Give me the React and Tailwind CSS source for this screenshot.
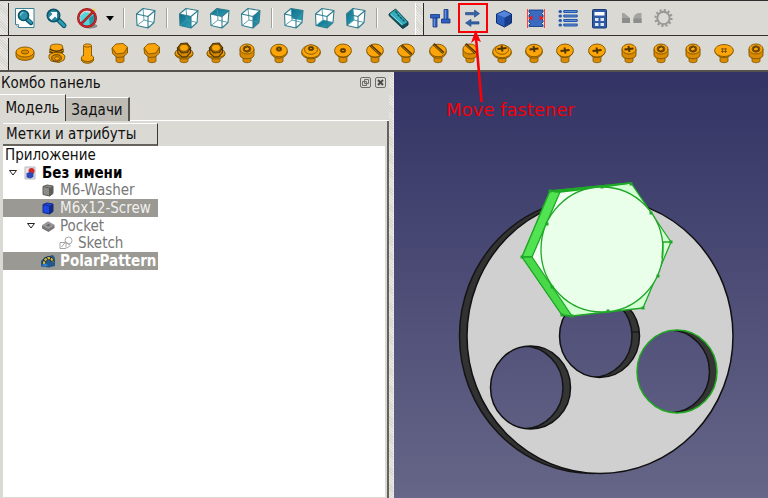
import clsx from 'clsx'

/* ---------- view cube ---------- */

const cubeFaces = {
  front: '2.5,8 14,10.5 14,22 3,19.5',
  top: '2.5,8 9,2.5 21,4.5 14,10.5',
  right: '14,10.5 21,4.5 20,16.5 14,22',
  rear: '9,2.5 21,4.5 20,14.5 10,12.5',
  bottom: '3,19.5 10,14 20,16.5 14,22',
  left: '2.5,8 9,2.5 10,14 3,19.5',
}

function Cube({ face }) {
  return (
    <svg width="24" height="24" viewBox="0 0 24 24" aria-hidden>
      <defs>
        <linearGradient id="cubeFace" x1="0" y1="0" x2="1" y2="1">
          <stop offset="0" stopColor="#0a6c88" />
          <stop offset="1" stopColor="#2fa3bb" />
        </linearGradient>
      </defs>
      <polygon points="2.5,8 9,2.5 21,4.5 20,16.5 14,22 3,19.5" fill="#fff" />
      {face && <polygon points={cubeFaces[face]} fill="url(#cubeFace)" />}
      <path d="M9 2.5 10 14 3 19.5M10 14l10 2.5" stroke="#4b98a8" strokeWidth="0.9" fill="none" />
      <path
        d="M2.5 8 9 2.5l12 2-1 12-6 5.5L3 19.5zM2.5 8 14 10.5 21 4.5M14 10.5V22"
        stroke="#2f7d8e"
        strokeWidth="1.1"
        strokeLinejoin="round"
        fill="none"
      />
    </svg>
  )
}

/* ---------- top toolbar icons ---------- */

function FitAll() {
  return (
    <svg width="24" height="24" viewBox="0 0 24 24" aria-hidden>
      <path d="M2.5 2.5H21v19H5.5l-3-3z" fill="#fff" stroke="#3a7f90" strokeWidth="1" />
      <path d="M2.5 18.500h3v3" fill="#cfe0e4" stroke="#3a7f90" strokeWidth="0.8" />
      <path d="m14 13.500 4 3.500" stroke="#0b5468" strokeWidth="4.400" strokeLinecap="round" />
      <path d="m14.500 13.500 3.500 3.200" stroke="#2a9cb5" strokeWidth="2.400" strokeLinecap="round" />
      <circle cx="10.500" cy="9.500" r="5" fill="#2d93ab" stroke="#0b5468" strokeWidth="1.600" />
      <path d="M7.500 9.500a3 3 0 0 1 3-3" stroke="#8fd0dd" strokeWidth="1.200" fill="none" />
    </svg>
  )
}

function FitSelection() {
  return (
    <svg width="24" height="24" viewBox="0 0 24 24" aria-hidden>
      <path d="m15 14.500 5 5" stroke="#0b5468" strokeWidth="5" strokeLinecap="round" />
      <path d="m15.500 15 4.500 4.500" stroke="#2a9cb5" strokeWidth="3" strokeLinecap="round" />
      <circle cx="9.500" cy="9.500" r="6.200" fill="#2587a0" stroke="#0b5468" strokeWidth="1.600" />
      <path d="M13 6v6.500l-2-2-3.500 3.500-2.500-2.500L8.500 8l-2-2z" fill="#fff" />
    </svg>
  )
}

function DrawStyle() {
  return (
    <svg width="24" height="24" viewBox="0 0 24 24" aria-hidden>
      <ellipse cx="15" cy="20" rx="7.500" ry="2.500" fill="#8d8b86" />
      <path d="m5 10 5-4 10 2v9l-5 4-9-3z" fill="#55d3da" />
      <path d="m14 12 6-4v9l-5 4z" fill="#2798a5" />
      <path d="m13 11 7-8" stroke="#f2d648" strokeWidth="2.600" />
      <circle cx="12" cy="12" r="8.800" fill="none" stroke="#8e1218" strokeWidth="2.400" />
      <path d="M18.300 5.700 5.700 18.300" stroke="#8e1218" strokeWidth="2.400" />
      <circle cx="12" cy="12" r="8.800" fill="none" stroke="#c8282e" strokeWidth="1.400" />
      <path d="M18.300 5.700 5.700 18.300" stroke="#c8282e" strokeWidth="1.400" />
    </svg>
  )
}

function Measure() {
  return (
    <svg width="24" height="24" viewBox="0 0 24 24" aria-hidden>
      <path d="M2 8 8.500 3 21 16v3l-5 3.500-1-.5L2 9.500z" fill="#174a55" stroke="#103f49" strokeWidth="1" strokeLinejoin="round" />
      <path d="M2.500 8 8.500 3.500 20.500 16 15 19.500z" fill="#35aebb" />
      <path d="m8 5 2.500 2.500m0 1 2 2m.5.500 2 2m.5.500 2 2" stroke="#0d5563" strokeWidth="1.400" />
      <path d="m4 8.500 11 10" stroke="#8ee0e6" strokeWidth="0.9" />
    </svg>
  )
}

function Bolts() {
  return (
    <svg width="24" height="24" viewBox="0 0 24 24" aria-hidden>
      <g fill="#2f5fc4" stroke="#16357c" strokeWidth="0.8">
        <path d="M5 11h4v10H5z" />
        <path d="M2.500 8.500h9V12h-9z" />
        <path d="M16 3.500h4V14h-4z" />
        <path d="M13.500 13h8.500v4h-8.500z" />
      </g>
      <path d="M6.300 12.500v8M17.300 4v9" stroke="#7fa5ea" strokeWidth="0.9" />
    </svg>
  )
}

function MoveFastener() {
  return (
    <svg width="24" height="24" viewBox="0 0 24 24" aria-hidden>
      <g fill="#3465a4" stroke="#1d3f86" strokeWidth="0.6">
        <path d="M5.500 6.500h9V4l5 3.600-5 3.600V8.800h-9z" />
        <path d="M19 15.800h-8v-2.500l-5.500 3.600 5.500 3.600v-2.400h8z" />
      </g>
    </svg>
  )
}

function BlueBox() {
  return (
    <svg width="24" height="24" viewBox="0 0 24 24" aria-hidden>
      <path d="m4.500 8 8-3.500L19.500 8v9l-7 4-8-4z" fill="#2c5cbc" stroke="#102f70" strokeWidth="1" strokeLinejoin="round" />
      <path d="m5 8.200 7.500-3.200 6.500 3.200-6.500 3.300z" fill="#5585da" />
      <path d="M12.500 12 19 8.500V17l-6.500 3.500z" fill="#173d8c" />
    </svg>
  )
}

function ThreadSize() {
  return (
    <svg width="24" height="24" viewBox="0 0 24 24" aria-hidden>
      <path
        d="M5 4h14v2l-1.500 1.500L19 9v2l-1.500 1.500L19 14v2l-1.500 1.500L19 19v1.500H5V19l1.500-1.500L5 16v-2l1.500-1.500L5 11V9l1.500-1.500L5 6z"
        fill="#3b6bc0"
        stroke="#1b3f86"
        strokeWidth="0.9"
      />
      <path d="M3.500 3v19M20.500 3v19" stroke="#ff3b3b" strokeWidth="1" />
      <path d="m4 12 4.500-2.500v5zM20 12l-4.500-2.500v5z" fill="#f01818" />
    </svg>
  )
}

function BomList() {
  return (
    <svg width="24" height="24" viewBox="0 0 24 24" aria-hidden>
      {[5.5, 10, 14.5, 19].map((y) => (
        <g key={y} stroke="#2458ac" strokeLinecap="round">
          <path d={`M4 ${y}h.5`} strokeWidth="3" />
          <path d={`M8.500 ${y}h12`} strokeWidth="2.800" />
          <path d={`M9 ${y}h11`} stroke="#6f9ad8" strokeWidth="0.8" />
        </g>
      ))}
    </svg>
  )
}

function Calculator() {
  return (
    <svg width="24" height="24" viewBox="0 0 24 24" aria-hidden>
      <rect x="4.500" y="3.500" width="14" height="18.500" rx="1" fill="#2f5ba6" stroke="#1b3a78" strokeWidth="1" />
      <rect x="6.500" y="6" width="10" height="3.500" fill="#fff" />
      <g fill="#dce6f6">
        <rect x="7" y="12" width="3.500" height="3" />
        <rect x="12.500" y="12" width="3.500" height="3" />
        <rect x="7" y="17" width="3.500" height="3" />
        <rect x="12.500" y="17" width="3.500" height="3" />
      </g>
    </svg>
  )
}

function Chamfer() {
  return (
    <svg width="24" height="24" viewBox="0 0 24 24" aria-hidden>
      <path d="M2 7h2l6 5v5H2z" fill="#a3a3a1" />
      <path d="M21.500 7H18c-3 1-4.500 3-4.500 5.500V17h8z" fill="#a3a3a1" />
      <path d="M2 12h8v5H2zM13.500 12.500h8V17h-8z" fill="#8d8d8b" />
    </svg>
  )
}

function Gear() {
  return (
    <svg width="24" height="24" viewBox="0 0 24 24" aria-hidden>
      <circle cx="11.500" cy="12" r="8" fill="none" stroke="#979795" strokeWidth="2.200" strokeDasharray="2.100 2.090" />
      <circle cx="11.500" cy="12" r="6.200" fill="none" stroke="#979795" strokeWidth="2" />
    </svg>
  )
}

/* ---------- fasteners ---------- */

const INK = '#7d5300'
const GOLD = '#fca50a'
const DEEP = '#d98a00'

const Shaft = () => <path d="M8 14v6c0 2.200 8 2.200 8 0v-6z" fill={DEEP} stroke={INK} strokeWidth="0.8" />

function Recess({ drive, y = 8.5 }) {
  if (drive === 'slot') {
    return (
      <>
        <path d={`M7.500 ${y - 5} 17.500 ${y + 4}`} stroke="#4d3300" strokeWidth="2.800" />
        <path d={`M7.500 ${y - 4.5} 17 ${y + 4}`} stroke="#b87700" strokeWidth="1" />
      </>
    )
  }
  if (drive === 'cross') {
    return <path d={`M7.500 ${y + 0.5}l9-1M11.500 ${y - 3}l1 6`} stroke="#4d3300" strokeWidth="1.900" />
  }
  if (drive === 'hex') {
    return (
      <>
        <ellipse cx="12" cy={y} rx="4" ry="3.200" fill="#7d5300" />
        <path d={`M9.800 ${y - 1.2}l2.700-.9 2 1.500-.8 2.200-2.700.4-1.500-1.300z`} fill={GOLD} stroke="#3d2900" strokeWidth="0.8" />
      </>
    )
  }
  return (
    <>
      <ellipse cx="12" cy={y} rx="2.800" ry="2.200" fill="#5a3b00" />
      <path d={`M11 ${y}h2`} stroke="#d98a00" strokeWidth="1" />
    </>
  )
}

function Fastener({ head, drive }) {
  return (
    <svg width="24" height="24" viewBox="0 0 24 24" stroke={INK} strokeWidth="0.9" aria-hidden>
      {head === 'washer' && (
        <>
          <path d="M3 11v3.500c0 6.500 18 6.500 18 0V11z" fill={DEEP} />
          <ellipse cx="12" cy="11" rx="9" ry="5" fill={GOLD} />
          <ellipse cx="12" cy="11" rx="3.800" ry="2" fill={DEEP} />
        </>
      )}
      {head === 'nut' && (
        <>
          <path d="M5.500 5c0-2.500 12-2.500 12 0l1 6-14 1z" fill={GOLD} />
          <path d="M5 8c3 3 10 3 13 0M5 10.500c3 3 10 3 13 0" fill="none" stroke="#4d3300" strokeWidth="1.600" />
          <path d="m4 14 5-2.500 8 .5 3 3-1 4-5 2.500-8-1.500-2-3z" fill={GOLD} />
          <ellipse cx="11.500" cy="17" rx="4.800" ry="3.300" fill={DEEP} stroke="#4d3300" />
          <ellipse cx="12" cy="17.500" rx="2.500" ry="1.800" fill={GOLD} />
        </>
      )}
      {head === 'rivet' && (
        <>
          <ellipse cx="11.500" cy="18.500" rx="6.200" ry="3.800" fill={DEEP} />
          <ellipse cx="11.500" cy="17" rx="6.200" ry="3.500" fill={GOLD} />
          <path d="M7.500 4.500v12c0 2.200 8 2.200 8 0v-12z" fill={GOLD} stroke="none" />
          <path d="M7.500 4.500V15M15.500 4.500V15" />
          <ellipse cx="11.500" cy="4.500" rx="4" ry="1.600" fill={GOLD} />
        </>
      )}
      {head === 'hexhead' && (
        <>
          <Shaft />
          <path d="m4 7 .5 5.500 4.500 4 6-.5 4.500-4V6.500z" fill={DEEP} />
          <path d="M4 7 8 3l7-.5L19.500 6l-3.500 6-7.500 1z" fill={GOLD} />
        </>
      )}
      {head === 'hexflange' && (
        <>
          <Shaft />
          <ellipse cx="12" cy="13" rx="9" ry="5" fill={DEEP} />
          <ellipse cx="12" cy="12" rx="9" ry="4.500" fill={GOLD} />
          <path d="m5.500 7 .5 5.500 4 3.500 5-.5 3.500-4V6.500z" fill={DEEP} stroke="#4d3300" strokeWidth="1.200" />
          <path d="m5.500 7 3.500-4.500 6-.5 3.500 4.500-3 5-6 .5z" fill="#9a6500" stroke="#4d3300" strokeWidth="1.200" />
          <ellipse cx="12" cy="6.800" rx="4.400" ry="3.400" fill={GOLD} />
        </>
      )}
      {head === 'cyl' && (
        <>
          <Shaft />
          <path d="M5 8v6c0 5 14 5 14 0V8z" fill={DEEP} />
          <ellipse cx="12" cy="8" rx="7" ry="5" fill={GOLD} />
          <Recess drive={drive} y={8} />
        </>
      )}
      {head === 'pan' && (
        <>
          <Shaft />
          <ellipse cx="12" cy="11" rx="8.300" ry="6.200" fill={DEEP} />
          <ellipse cx="12" cy="9.500" rx="8.300" ry="6.300" fill={GOLD} />
          <Recess drive={drive} y={8} />
        </>
      )}
      {head === 'flange' && (
        <>
          <Shaft />
          <ellipse cx="12" cy="12" rx="9.300" ry="5.800" fill={DEEP} />
          <ellipse cx="12" cy="10.500" rx="9.300" ry="6.200" fill={GOLD} />
          <ellipse cx="12" cy="8.500" rx="6.500" ry="4.800" fill={GOLD} />
          <Recess drive={drive} y={7.5} />
        </>
      )}
      {head === 'csk' && (
        <>
          <Shaft />
          <path d="M4 10.500c.5 4 4 6 8 6s7.500-2 8-6z" fill={DEEP} />
          <ellipse cx="12" cy="9.500" rx="8.400" ry="6.500" fill={GOLD} />
          <Recess drive={drive} y={9.5} />
        </>
      )}
      {head === 'flat' && (
        <>
          <Shaft />
          <path d="M3 10.500c1 4 5 6 9 6s8-2 9-6z" fill={DEEP} />
          <ellipse cx="12" cy="9.500" rx="9.400" ry="6" fill={GOLD} />
          <path d="M9 8h6M9 10.500h6M10.500 7v5M13.500 7v5" strokeWidth="0.9" />
        </>
      )}
    </svg>
  )
}

const fasteners = [
  { label: 'Washer', head: 'washer' },
  { label: 'Nut', head: 'nut' },
  { label: 'Threaded rod', head: 'rivet' },
  { label: 'Hex bolt', head: 'hexhead' },
  { label: 'Hex screw', head: 'hexhead' },
  { label: 'Hex flange bolt', head: 'hexflange' },
  { label: 'Heavy flange bolt', head: 'hexflange' },
  { label: 'Socket cap', head: 'cyl', drive: 'hex' },
  { label: 'Button head', head: 'pan', drive: 'dot' },
  { label: 'Button flange', head: 'flange', drive: 'dot' },
  { label: 'Countersunk socket', head: 'csk', drive: 'dot' },
  { label: 'Slotted countersunk', head: 'csk', drive: 'slot' },
  { label: 'Slotted raised', head: 'csk', drive: 'slot' },
  { label: 'Slotted cheese', head: 'pan', drive: 'slot' },
  { label: 'Slotted pan', head: 'cyl', drive: 'slot' },
  { label: 'Cross flange', head: 'flange', drive: 'cross' },
  { label: 'Cross pan', head: 'pan', drive: 'cross' },
  { label: 'Cross countersunk', head: 'csk', drive: 'cross' },
  { label: 'Cross raised', head: 'csk', drive: 'cross' },
  { label: 'Cross cheese', head: 'cyl', drive: 'cross' },
  { label: 'Hexalobular cap', head: 'cyl', drive: 'hex' },
  { label: 'Hexalobular cheese', head: 'cyl', drive: 'hex' },
  { label: 'Hexalobular countersunk', head: 'flat' },
  { label: 'Hexalobular raised', head: 'cyl', drive: 'hex' },
]

/* ---------- toolbars ---------- */

const ToolButton = ({ label, className, children }) => (
  <button type="button" aria-label={label} className={clsx('flex h-8 items-center justify-center', className)}>
    {children}
  </button>
)

const Separator = () => (
  <div className="flex w-3 justify-center">
    <div className="h-5 w-[2px] border-l border-[#a3a19c] bg-white" />
  </div>
)

const Handle = ({ className }) => (
  <div
    className={clsx(
      'shrink-0 self-stretch border-r border-r-[#2b2a28] bg-[#d6d4cf] bg-[repeating-linear-gradient(45deg,#eae8e5_0px,#eae8e5_1px,transparent_1px,transparent_2px)]',
      className,
    )}
  />
)

const views = [
  [{ label: 'Axonometric' }],
  [
    { label: 'Front', face: 'front' },
    { label: 'Top', face: 'top' },
    { label: 'Right', face: 'right' },
  ],
  [
    { label: 'Rear', face: 'rear' },
    { label: 'Bottom', face: 'bottom' },
    { label: 'Left', face: 'left' },
  ],
]

const fastenerTools = [
  { label: 'Flip fastener', icon: Bolts },
  { label: 'Move fastener', icon: MoveFastener, marked: true },
  { label: 'Simplify shape', icon: BlueBox },
  { label: 'Match thread', icon: ThreadSize },
  { label: 'Bill of materials', icon: BomList },
  { label: 'Screw calculator', icon: Calculator },
  { label: 'Countersunk holes', icon: Chamfer },
  { label: 'Parameters', icon: Gear },
]

function ViewToolbar() {
  return (
    <div className="flex h-9 items-center overflow-hidden border-t border-b border-t-[#2f2d2e] border-b-[#33302f]">
      <Handle className="mt-[2px] w-[9px]" />
      <ToolButton label="Fit all" className="w-[31px]"><FitAll /></ToolButton>
      <ToolButton label="Fit selection" className="w-[31px]"><FitSelection /></ToolButton>
      <ToolButton label="Draw style" className="w-[31px]"><DrawStyle /></ToolButton>
      <ToolButton label="Draw style menu" className="w-4">
        <svg width="8" height="5" viewBox="0 0 8 5" aria-hidden><path d="M0 0h8L4 5z" /></svg>
      </ToolButton>
      {views.map((group) => (
        <div key={group[0].label} className="flex items-center">
          <Separator />
          {group.map(({ label, face }) => (
            <ToolButton key={label} label={label} className="w-[31px]"><Cube face={face} /></ToolButton>
          ))}
        </div>
      ))}
      <Separator />
      <ToolButton label="Measure" className="w-[31px]"><Measure /></ToolButton>
      <Handle className="mt-[2px] ml-px w-[9px] border-l border-l-white" />
      {fastenerTools.map(({ label, icon: Icon, marked }) => (
        <ToolButton
          key={label}
          label={label}
          className={clsx('w-8 shrink-0', marked && 'relative')}
        >
          <Icon />
          {marked && <span className="absolute inset-y-px right-0 left-[2px] border-2 border-[#fb0007]" />}
        </ToolButton>
      ))}
    </div>
  )
}

function FastenerToolbar() {
  return (
    <div className="flex h-9 items-center overflow-hidden border-b-2 border-[#55524e]">
      <Handle className="mt-[2px] w-[9px]" />
      <div className="-mr-1 flex flex-1">
        {fasteners.map(({ label, head, drive }) => (
          <ToolButton key={label} label={label} className="min-w-0 flex-1">
            <Fastener head={head} drive={drive} />
          </ToolButton>
        ))}
      </div>
    </div>
  )
}

/* ---------- combo panel ---------- */

const DocIcon = () => (
  <svg width="14" height="14" viewBox="0 0 14 14" aria-hidden>
    <path d="M2 1h10v12H2z" fill="#e6e6ea" stroke="#b8b8bc" />
    <circle cx="8.500" cy="5" r="3" fill="#d02828" />
    <path d="m3.500 7 4-1 3 1v4l-3 1.500-4-1z" fill="#2f48b8" />
  </svg>
)

const BoxIcon = ({ fill, shade }) => (
  <svg width="14" height="14" viewBox="0 0 14 14" aria-hidden>
    <path d="m2 3.500 4-1.500 6 1v7.500L8.500 13 2 11.500z" fill={fill} stroke={shade} />
    <path d="m8.500 5 3.500-2v7.500L8.500 13z" fill={shade} />
    <path d="m2 3.500 6.500 1.500V13" fill="none" stroke={shade} />
  </svg>
)

const PocketIcon = () => (
  <svg width="14" height="14" viewBox="0 0 14 14" aria-hidden>
    <path d="m1 6.500 6-4 6.500 3.500v3L7.500 13 1 9.500z" fill="#777" />
    <path d="m1 6.500 6-4 6.500 3.500-6 4z" fill="#999" />
    <path d="m5 6.500 2.500-1.500L10 6 7.500 7.500z" fill="#666" />
  </svg>
)

const SketchIcon = () => (
  <svg width="14" height="14" viewBox="0 0 14 14" fill="none" stroke="#a6a6a6" aria-hidden>
    <path d="M1 6.500h6v6H1zM2.500 11l4-5" />
    <circle cx="9.500" cy="4.500" r="3.500" />
    <path d="m6 5 5.500 4.500L8 12" />
  </svg>
)

const PatternIcon = () => (
  <svg width="14" height="14" viewBox="0 0 14 14" aria-hidden>
    <path d="m0 7 4-4 8-2 2 3v8l-6 1.500-8-1z" fill="#23588f" />
    <path d="M3 10c0-7 8-8 9-2" fill="none" stroke="#1c2c40" strokeWidth="3.500" />
    <path d="M3 10c0-7 8-8 9-2" fill="none" stroke="#d9bb30" strokeWidth="2.200" strokeDasharray="2.500 1" />
    <path d="m1 11 3-1.500 3 1.500-3 2z" fill="#2f7fd0" />
  </svg>
)

const tree = [
  { name: 'Приложение', pad: 'pl-[2px]' },
  { name: 'Без имени', pad: 'pl-px', open: true, icon: <DocIcon />, style: 'font-bold text-black' },
  { name: 'M6-Washer', pad: 'pl-[19px]', icon: <BoxIcon fill="#8b8b88" shade="#5c5c5a" />, style: 'text-[#777]' },
  {
    name: 'M6x12-Screw',
    pad: 'pl-[19px]',
    icon: <BoxIcon fill="#1c48e8" shade="#122a80" />,
    style: 'bg-[#9b9993] text-[#f0f0ee]',
    selected: true,
  },
  { name: 'Pocket', pad: 'pl-[19px]', open: true, icon: <PocketIcon />, style: 'text-[#777]' },
  { name: 'Sketch', pad: 'pl-[37px]', icon: <SketchIcon />, style: 'text-[#777]' },
  {
    name: 'PolarPattern',
    pad: 'pl-[19px]',
    icon: <PatternIcon />,
    style: 'bg-[#9b9993] font-bold text-white',
    selected: true,
  },
]

function TreeRow({ name, pad, open, icon, style, selected }) {
  return (
    <div role="treeitem" aria-selected={!!selected} className={clsx('flex items-center', pad, style)}>
      {icon && (
        <>
          <span className="flex w-[18px] shrink-0 justify-center">
            {open && (
              <svg width="10" height="8" viewBox="0 0 10 8" aria-hidden>
                <path d="M1.500 1.500h7L5 6z" fill="#fff" stroke="#222" />
              </svg>
            )}
          </span>
          <span className="mr-1 flex w-4 shrink-0 justify-center">{icon}</span>
        </>
      )}
      <span className="whitespace-nowrap">{name}</span>
    </div>
  )
}

function ComboPanel() {
  return (
    <aside className="flex w-[389px] shrink-0 flex-col">
      <header className="flex h-[21px] items-center pr-[3px] pl-px">
        <h2 className="flex-1">Комбо панель</h2>
        <button type="button" aria-label="Float" className="mr-1">
          <svg width="11" height="11" viewBox="0 0 11 11" fill="none" stroke="#6f6d69" aria-hidden>
            <rect x="0.500" y="0.500" width="10" height="10" rx="1.500" />
            <path d="M4.500 2.500h4v4h-4zM2.500 4.500h4v4h-4z" />
          </svg>
        </button>
        <button type="button" aria-label="Close">
          <svg width="11" height="11" viewBox="0 0 11 11" fill="none" stroke="#6f6d69" aria-hidden>
            <rect x="0.500" y="0.500" width="10" height="10" rx="1.500" />
            <path d="m3 3 5 5M8 3 3 8" stroke="#4c4a47" strokeWidth="2" />
          </svg>
        </button>
      </header>

      <div role="tablist" className="flex h-[28px] items-end">
        <button
          type="button"
          role="tab"
          aria-selected="true"
          className="h-[27px] w-[66px] border-t border-r border-t-white border-r-[#3c3a37]"
        >
          Модель
        </button>
        <button
          type="button"
          role="tab"
          aria-selected="false"
          className="h-6 w-16 border-t border-r-2 border-t-white border-r-[#55524e] bg-[#bfbcb6]"
        >
          Задачи
        </button>
        <div className="flex-1 self-stretch border-b border-white" />
      </div>

      <div className="flex flex-1 flex-col border-r-2 border-[#66625d] pr-[2px] pb-px pl-[3px]">
        <div className="mt-[2px] flex h-[23px] w-[155px] items-center border-t border-r border-b-2 border-t-white border-r-[#3c3a37] border-b-[#66625d] pl-[3px]">
          Метки и атрибуты
        </div>
        <div className="flex-1 bg-white">
          <div role="tree" className="grid h-[124px] w-[155px] auto-rows-fr">
            {tree.map((row) => (
              <TreeRow key={row.name} {...row} />
            ))}
          </div>
        </div>
      </div>
    </aside>
  )
}

/* ---------- 3D view ---------- */

const holes = [
  { id: 'left', cx: 530.5, cy: 387.5, edge: '#111' },
  { id: 'middle', cx: 599.5, cy: 336, edge: '#111' },
  { id: 'right', cx: 677, cy: 371.5, edge: '#1fa81f' },
]

const corners = [
  [550, 191], [631, 184], [671, 242], [643, 308], [572, 316], [562, 315], [522, 257],
  [547, 224], [651, 213], [658, 276], [552, 287], [602, 187], [608, 311],
]

function Scene() {
  return (
    <svg viewBox="394 72 374 426" preserveAspectRatio="xMidYMid slice" className="h-full w-full" aria-label="3D view">
      <defs>
        <linearGradient id="sky" gradientUnits="userSpaceOnUse" x1="0" y1="72" x2="0" y2="498">
          <stop offset="0" stopColor="#333365" />
          <stop offset="1" stopColor="#666688" />
        </linearGradient>
        {holes.map(({ id, cx, cy }) => (
          <clipPath key={id} id={`hole-${id}`}>
            <ellipse cx={cx} cy={cy} rx="40" ry="41.500" />
          </clipPath>
        ))}
      </defs>
      <rect x="394" y="72" width="374" height="426" fill="url(#sky)" />

      {/* plate */}
      <ellipse cx="592.500" cy="336" rx="133" ry="137.500" fill="#323232" stroke="#151515" strokeWidth="1.500" />
      <ellipse cx="600" cy="336" rx="133" ry="137.500" fill="#d0d0d0" stroke="#111" strokeWidth="1.500" />
      {holes.map(({ id, cx, cy, edge }) => (
        <g key={id}>
          <g clipPath={`url(#hole-${id})`}>
            <ellipse cx={cx} cy={cy} rx="40" ry="41.500" fill="#353535" />
            <ellipse cx={cx - 7.5} cy={cy} rx="40" ry="41.500" fill="url(#sky)" stroke="#151515" strokeWidth="1.500" />
          </g>
          <ellipse cx={cx} cy={cy} rx="40" ry="41.500" fill="none" stroke={edge} strokeWidth="1.500" />
        </g>
      ))}
      <path d="M632 332h7.500" stroke="#111" />

      {/* screw head */}
      <g stroke="#1fa827" strokeWidth="1.300" strokeLinejoin="round">
        <path d="m550 191 81-8 40 59-28 66-71 8-10-1-40-58z" fill="#d4ffd4" />
        <path d="m532 257 28-65 20 0-38 45-1 25 15 35z" fill="#f2fff2" stroke="none" />
        <path d="m550 191 10 1-28 65-10 0z" fill="#51e351" />
        <path d="m522 257 10 0 40 59-10-1z" fill="#48d848" />
        <path d="m550 191 81-8-36 5-35 4z" fill="#1fa827" />
        <ellipse cx="602" cy="249.500" rx="61" ry="62.500" fill="#eaffea" />
        <path d="M663 242h8M663 242l-1 16" fill="none" />
      </g>
      <g fill="#1fa827">
        {corners.map(([x, y]) => (
          <rect key={`${x}-${y}`} x={x - 1.5} y={y - 1.5} width="3" height="3" />
        ))}
      </g>
    </svg>
  )
}

export default function App() {
  return (
    <div
      className="relative flex h-screen flex-col overflow-hidden bg-[#dbd9d4] text-[15px] leading-4 text-[#111]"
      style={{ fontFamily: '"DejaVu Sans Condensed", "DejaVu Sans", sans-serif' }}
    >
      <ViewToolbar />
      <FastenerToolbar />

      <main className="flex min-h-0 flex-1">
        <ComboPanel />
        <div className="w-[5px] shrink-0 border-r border-[#e9e8e5] bg-[#d6d4cf] bg-[repeating-linear-gradient(45deg,#eae8e5_0px,#eae8e5_1px,transparent_1px,transparent_2px)]" />
        <div className="min-w-0 flex-1">
          <Scene />
        </div>
      </main>

      {/* callout over the toolbar and the view */}
      <svg width="24" height="74" viewBox="0 0 24 74" className="pointer-events-none absolute top-[30px] left-[464px]" aria-hidden>
        <path d="M17.500 72 12 8" stroke="#fb0007" strokeWidth="2.600" />
        <path d="M11.500 0 17 12l-5.500-2.500L7 13z" fill="#fb0007" />
      </svg>
      <p
        className="absolute top-[98px] left-[446px] text-[18px] leading-6 text-[#f00008]"
        style={{ fontFamily: '"DejaVu Sans", sans-serif' }}
      >
        Move fastener
      </p>
    </div>
  )
}
